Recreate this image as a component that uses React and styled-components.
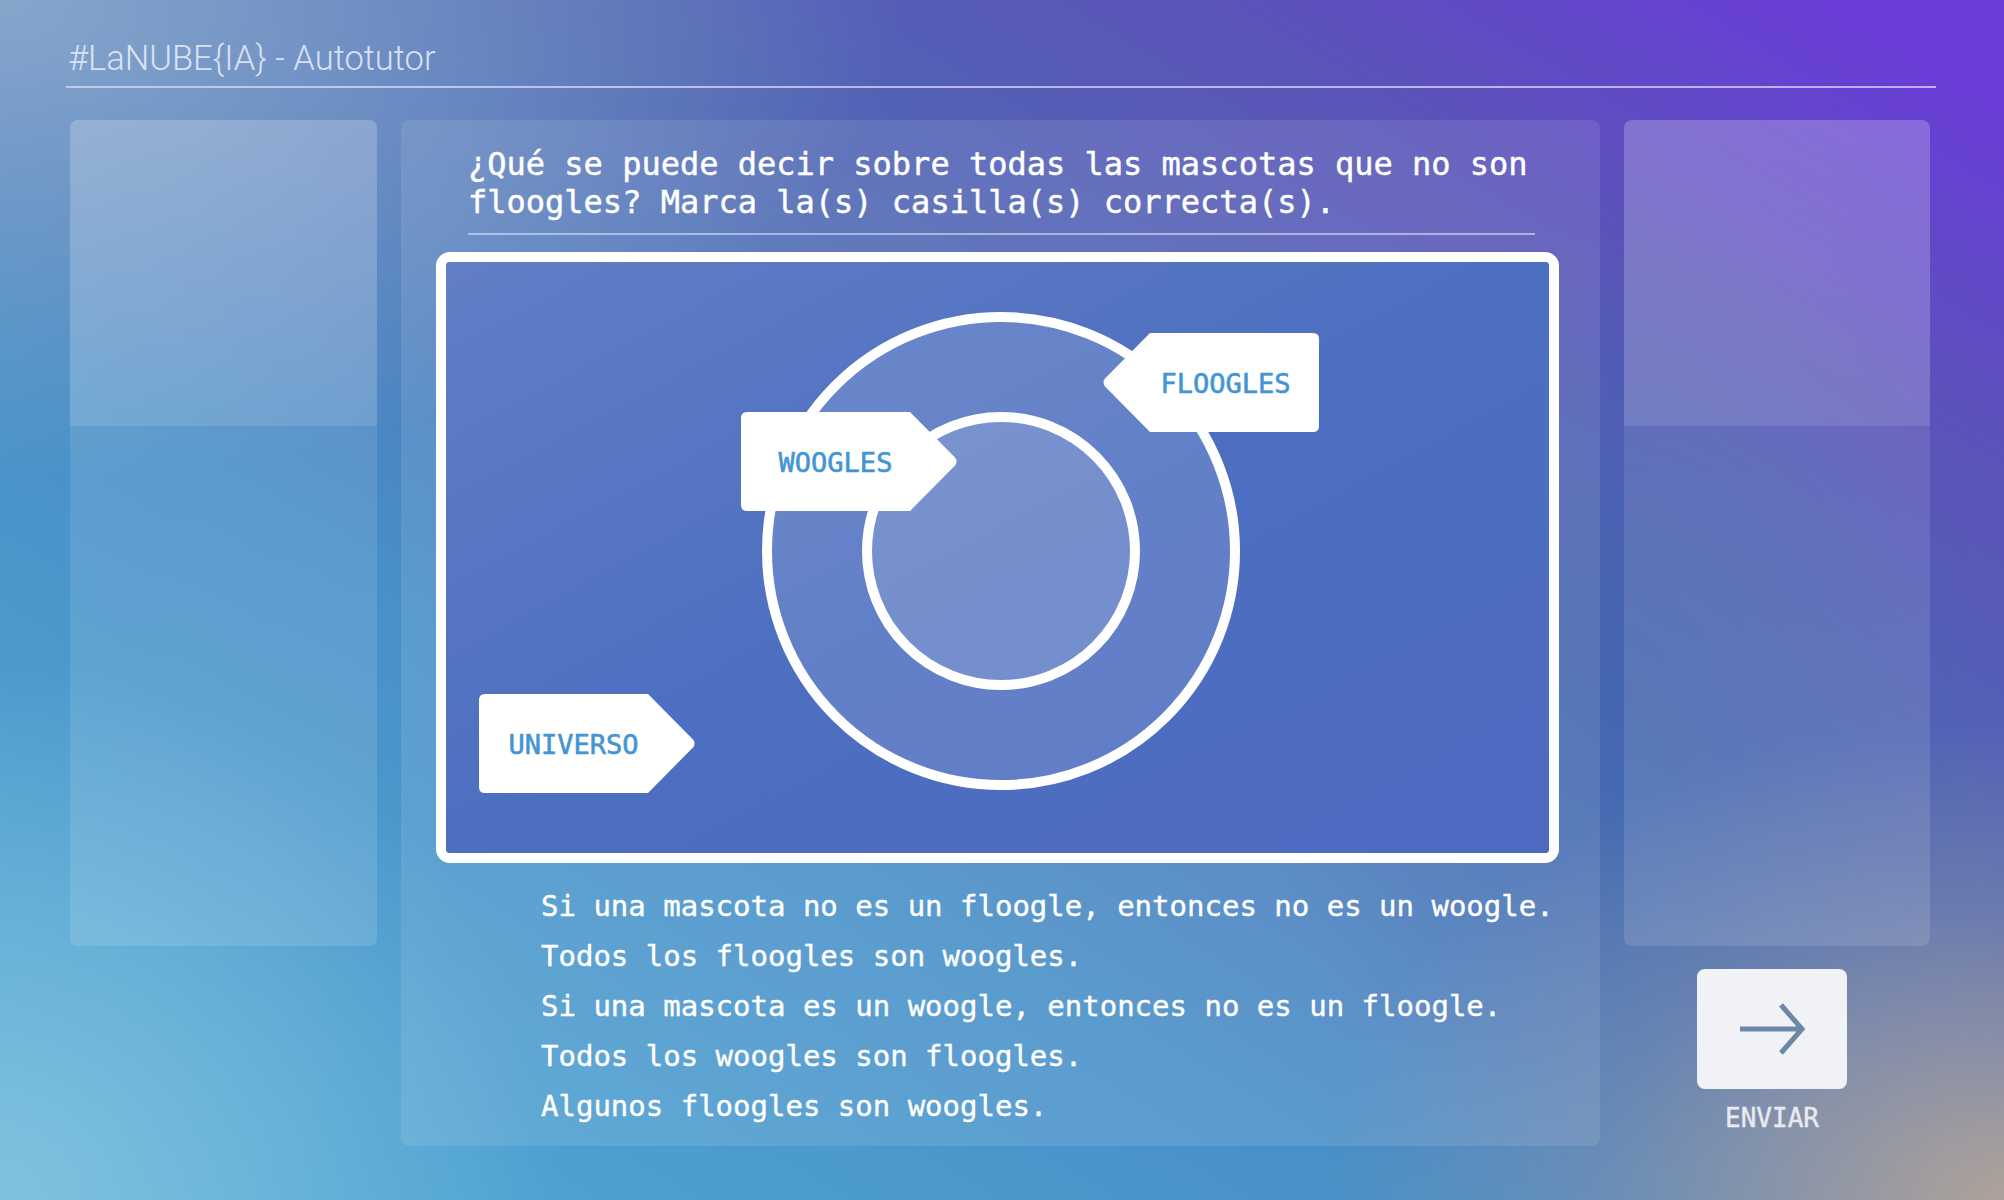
import React, { useState } from "react";
import styled, { createGlobalStyle } from "styled-components";

const GlobalStyle = createGlobalStyle`
	html, body {
		margin: 0;
		padding: 0;
	}
	body {
		font-family: "Roboto", "Liberation Sans", sans-serif;
	}
`;

const options = [
	"Si una mascota no es un floogle, entonces no es un woogle.",
	"Todos los floogles son woogles.",
	"Si una mascota es un woogle, entonces no es un floogle.",
	"Todos los woogles son floogles.",
	"Algunos floogles son woogles.",
];

// tags drawn on the diagram, in box coordinates
const tags = [
	{ label: "FLOOGLES", x: 666, y: 81, dir: "left" },
	{ label: "WOOGLES", x: 305, y: 160, dir: "right" },
	{ label: "UNIVERSO", x: 43, y: 442, dir: "right" },
];

const TAG_W = 217;
const TAG_H = 99;
const TIP = 48;

const tagPath = (x, y, dir) => {
	const r = 6;
	if (dir === "right") {
		const b = x + TAG_W - TIP;
		return `M${x + r},${y} L${b},${y} L${x + TAG_W - 3},${y + TAG_H / 2 - 4}
			Q${x + TAG_W},${y + TAG_H / 2} ${x + TAG_W - 3},${y + TAG_H / 2 + 4}
			L${b},${y + TAG_H} L${x + r},${y + TAG_H} Q${x},${y + TAG_H} ${x},${y + TAG_H - r}
			L${x},${y + r} Q${x},${y} ${x + r},${y} Z`;
	}
	const b = x + TIP;
	return `M${b},${y} L${x + TAG_W - r},${y} Q${x + TAG_W},${y} ${x + TAG_W},${y + r}
		L${x + TAG_W},${y + TAG_H - r} Q${x + TAG_W},${y + TAG_H} ${x + TAG_W - r},${y + TAG_H}
		L${b},${y + TAG_H} L${x + 3},${y + TAG_H / 2 + 4} Q${x},${y + TAG_H / 2} ${x + 3},${y + TAG_H / 2 - 4} Z`;
};

const Autotutor = () => {
	const [checked, setChecked] = useState([]);

	const toggle = (i) =>
		setChecked(checked.includes(i) ? checked.filter((c) => c !== i) : [...checked, i]);

	return (
		<Page>
			<GlobalStyle />
			<Header>
				<Title>#LaNUBE&#123;IA&#125; - Autotutor</Title>
			</Header>
			<Columns>
				<SideColumn>
					<SideCard />
				</SideColumn>

				<QuestionPanel>
					<Question>
						¿Qué se puede decir sobre todas las mascotas que no son floogles?
						Marca la(s) casilla(s) correcta(s).
					</Question>
					<Diagram>
						<svg width="1103" height="591" viewBox="0 0 1103 591">
							<defs>
								<linearGradient id="bg" x1="0" y1="0" x2="1" y2="1">
									<stop offset="0" stopColor="#617ec6" />
									<stop offset="0.5" stopColor="#4d6fc0" />
									<stop offset="1" stopColor="#4d6ac0" />
								</linearGradient>
							</defs>
							<rect width="1103" height="591" fill="url(#bg)" />
							<circle cx="555" cy="289" r="234" fill="rgba(255,255,255,0.12)" stroke="#fff" strokeWidth="10" />
							<circle cx="555" cy="289" r="134" fill="rgba(255,255,255,0.12)" stroke="#fff" strokeWidth="10" />
							{tags.map((t) => (
								<g key={t.label}>
									<path d={tagPath(t.x - 10, t.y - 10, t.dir)} fill="#fff" />
									<TagText
										x={t.dir === "left" ? t.x - 10 + TIP + (TAG_W - TIP) / 2 - 9 : t.x - 10 + (TAG_W - TIP) / 2 + 10}
										y={t.y - 10 + TAG_H / 2 + 10}
										textAnchor="middle"
									>
										{t.label}
									</TagText>
								</g>
							))}
						</svg>
					</Diagram>
					<Options>
						{options.map((o, i) => (
							<Option key={i} onClick={() => toggle(i)} $checked={checked.includes(i)}>
								{o}
							</Option>
						))}
					</Options>
				</QuestionPanel>

				<SideColumn>
					<SideCard />
					<SendArea>
						<SendButton>
							<svg width="70" height="56" viewBox="-3 -3 70 56">
								<path
									d="M0,25 L62,25 M41,1 L62,25 L41,49"
									fill="none"
									stroke="#6e87a8"
									strokeWidth="5"
								/>
							</svg>
						</SendButton>
						<SendLabel>ENVIAR</SendLabel>
					</SendArea>
				</SideColumn>
			</Columns>
		</Page>
	);
};

const Page = styled.div`
	width: 2004px;
	height: 1200px;
	overflow: hidden;
	box-sizing: border-box;
	background:
		radial-gradient(34% 40% at 100% 100%, rgba(180, 164, 152, 0.95), rgba(150, 150, 165, 0.4) 60%, rgba(150, 150, 165, 0) 100%),
		radial-gradient(18% 40% at 81% 58%, rgba(60, 100, 170, 0.6), rgba(60, 100, 170, 0) 100%),
		radial-gradient(45% 40% at 0% 0%, rgba(138, 168, 204, 0.95), rgba(138, 168, 204, 0) 100%),
		radial-gradient(28% 45% at 0% 100%, rgba(136, 198, 222, 0.85), rgba(136, 198, 222, 0) 100%),
		linear-gradient(to top right, #52acd8 0%, #4890c8 35%, #4f68b4 62%, #5a54b8 80%, #6a3cd8 96%);
`;

const Header = styled.header`
	margin-left: 66px;
	width: 1870px;
	height: 88px;
	display: flex;
	align-items: flex-end;
	border-bottom: 2px solid rgba(220, 215, 245, 0.75);
	box-sizing: border-box;
`;

const Title = styled.h1`
	margin: 0 0 8px 2px;
	font-family: "Roboto", "Liberation Sans", sans-serif;
	font-weight: 300;
	font-size: 34.5px;
	line-height: 40px;
	color: rgba(236, 240, 250, 0.85);
`;

const Columns = styled.main`
	display: grid;
	grid-template-columns: 307px 1199px 306px;
	column-gap: 24px;
	align-items: start;
	margin: 32px 0 0 70px;
`;

const SideColumn = styled.aside`
	display: flex;
	flex-direction: column;
	align-items: stretch;
`;

const SideCard = styled.div`
	height: 826px;
	border-radius: 8px;
	background: linear-gradient(
		to bottom,
		rgba(255, 255, 255, 0.22) 0,
		rgba(255, 255, 255, 0.2) 306px,
		rgba(255, 255, 255, 0.1) 306px,
		rgba(255, 255, 255, 0.12) 100%
	);
`;

const QuestionPanel = styled.section`
	height: 1026px;
	border-radius: 8px;
	background: rgba(255, 255, 255, 0.1);
	box-sizing: border-box;
	padding-top: 25px;
`;

const Question = styled.h2`
	margin: 0 65px 0 67px;
	padding-bottom: 12px;
	border-bottom: 2px solid rgba(220, 225, 245, 0.6);
	font-family: "DejaVu Sans Mono", "Liberation Mono", monospace;
	font-weight: 400;
	font-size: 32px;
	line-height: 38px;
	color: #fff;
	-webkit-text-stroke: 0.45px #fff;
`;

const Diagram = styled.div`
	width: 1123px;
	height: 611px;
	margin: 17px 0 0 35px;
	box-sizing: border-box;
	border: 10px solid #fff;
	border-radius: 14px;
	overflow: hidden;

	svg {
		display: block;
	}
`;

const TagText = styled.text`
	font-family: "DejaVu Sans Mono", "Liberation Mono", monospace;
	font-weight: 400;
	font-size: 27px;
	fill: #4495d3;
	stroke: #4495d3;
	stroke-width: 0.6px;
`;

const Options = styled.ul`
	list-style: none;
	margin: 18px 0 0 0;
	padding: 0 0 0 140px;
`;

const Option = styled.li`
	font-family: "DejaVu Sans Mono", "Liberation Mono", monospace;
	font-size: 29px;
	line-height: 50px;
	color: ${(p) => (p.$checked ? "#ffe9a8" : "#fff")};
	-webkit-text-stroke: 0.4px ${(p) => (p.$checked ? "#ffe9a8" : "#fff")};
	cursor: pointer;
	white-space: nowrap;
`;

const SendArea = styled.div`
	display: flex;
	flex-direction: column;
	align-items: center;
	margin-top: 23px;
	padding-right: 10px;
`;

const SendButton = styled.button`
	width: 150px;
	height: 120px;
	border: none;
	border-radius: 8px;
	background: #f0f2f6;
	display: flex;
	align-items: center;
	justify-content: center;
	cursor: pointer;
`;

const SendLabel = styled.span`
	margin-top: 14px;
	font-family: "DejaVu Sans Mono", "Liberation Mono", monospace;
	font-size: 26px;
	color: #e8eaf0;
	-webkit-text-stroke: 0.4px #e8eaf0;
`;

export default Autotutor;
